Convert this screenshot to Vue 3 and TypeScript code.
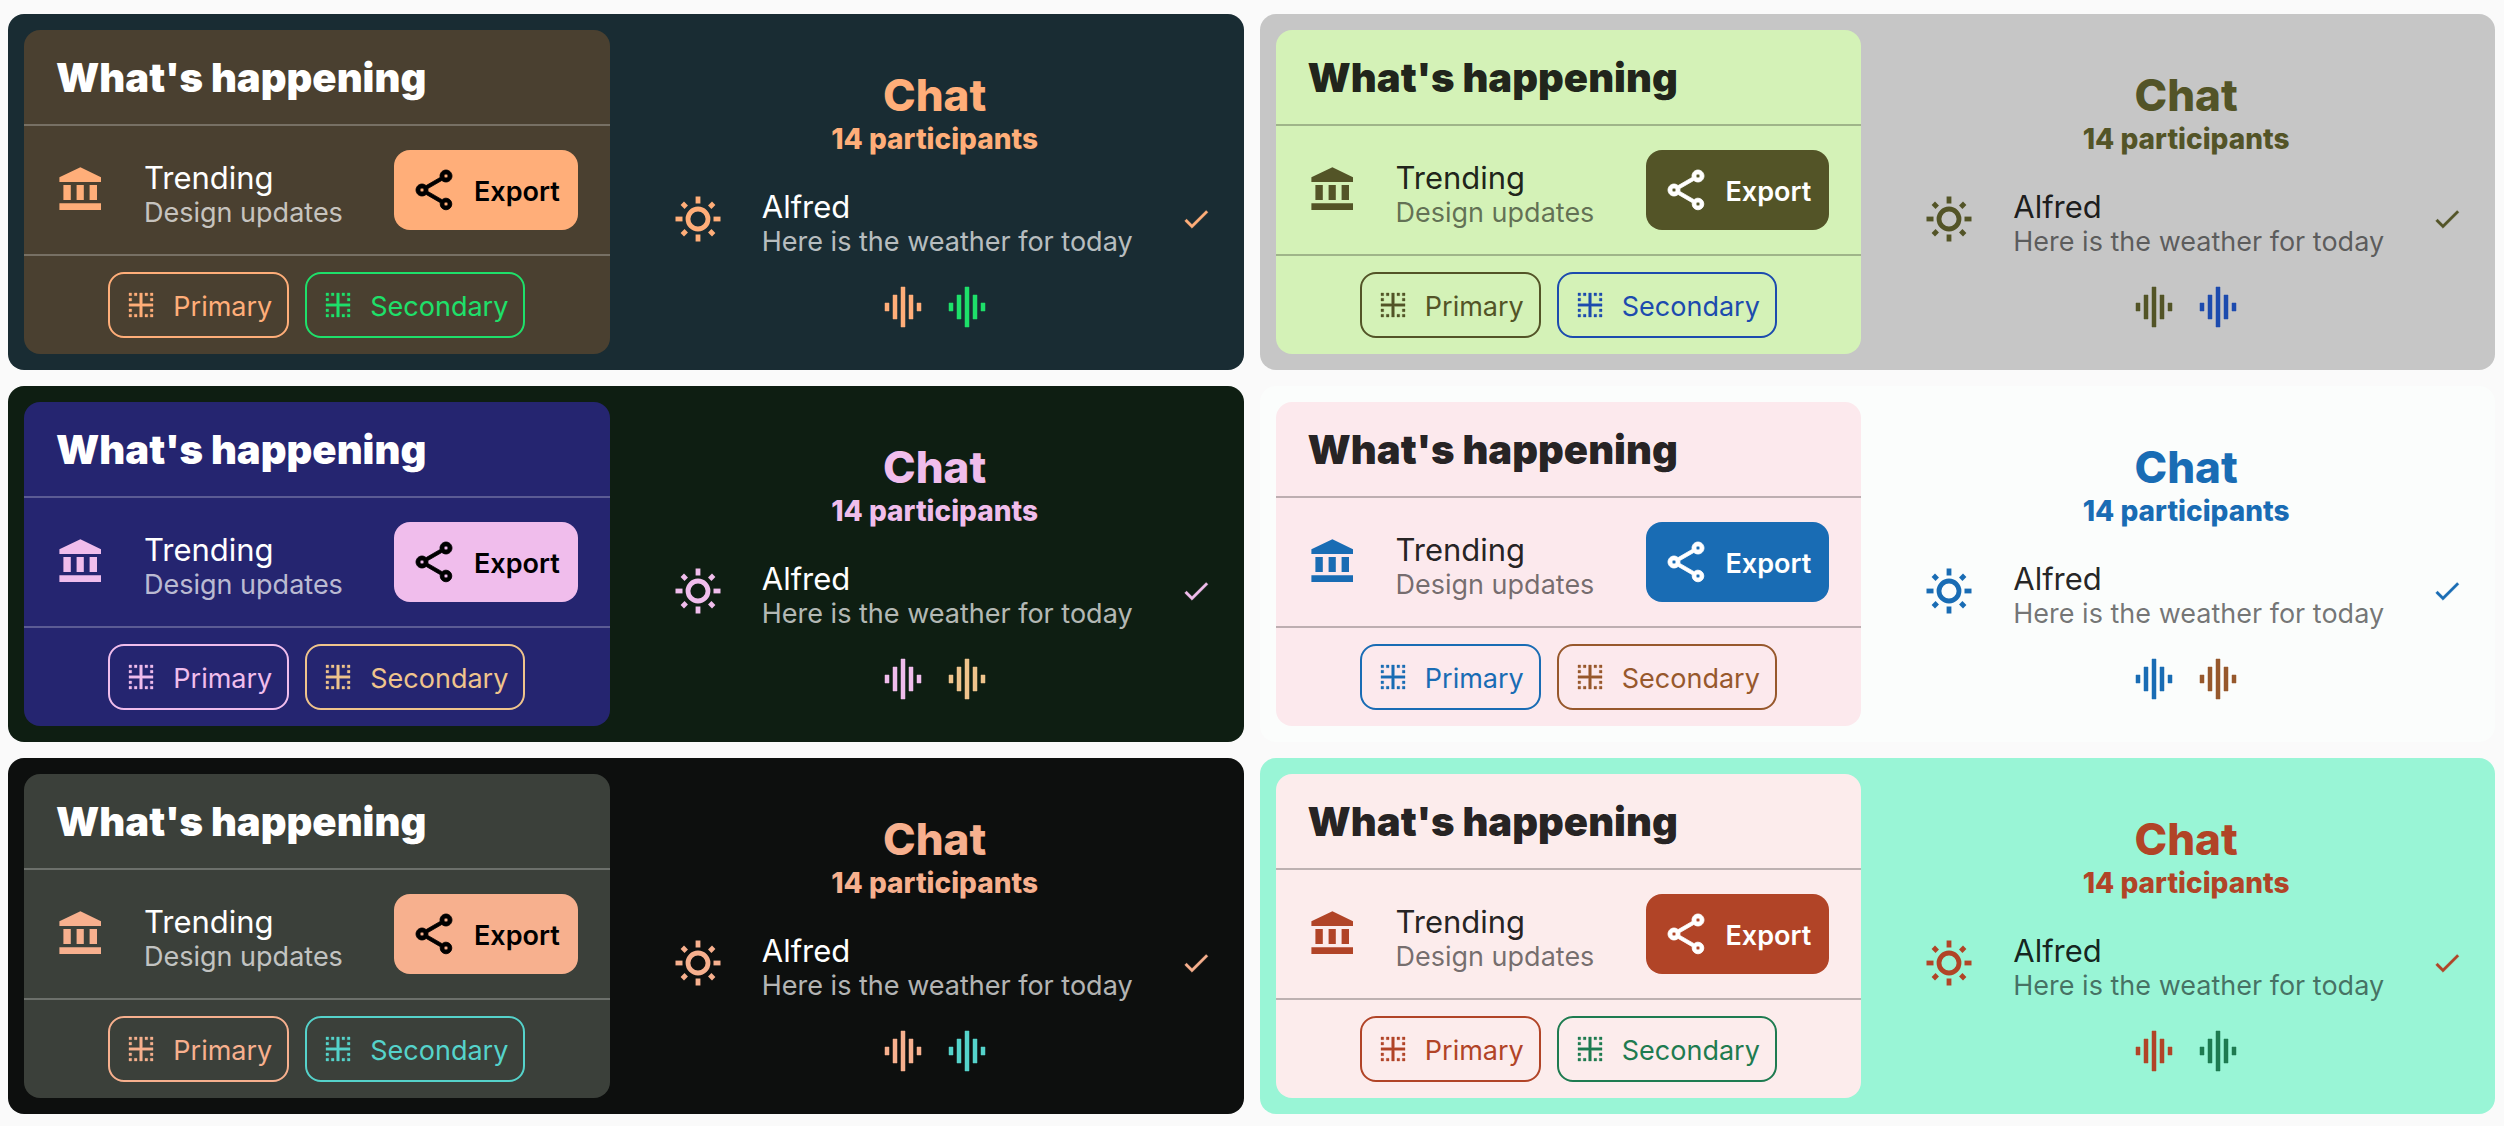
<script setup lang="ts">
interface Theme {
  id: string
  dark: boolean
  background: string
  surface: string
  primary: string
  secondary: string
}

const themes: Theme[] = [
  { id: 'dusk', dark: true, background: '#192c33', surface: '#4a4030', primary: '#ffae79', secondary: '#1ee06a' },
  { id: 'meadow', dark: false, background: '#c6c6c6', surface: '#d4f2b7', primary: '#535427', secondary: '#1c4bae' },
  { id: 'midnight', dark: true, background: '#0e1e12', surface: '#252570', primary: '#f0bdec', secondary: '#efc48c' },
  { id: 'blossom', dark: false, background: '#fbfdfc', surface: '#fce9ed', primary: '#196cb4', secondary: '#97582c' },
  { id: 'carbon', dark: true, background: '#0d0f0e', surface: '#3b403a', primary: '#f7b08e', secondary: '#55d3cb' },
  { id: 'mint', dark: false, background: '#99f5d6', surface: '#fcecec', primary: '#b14427', secondary: '#1e7b50' },
]

const icons = {
  bank: 'M12.2 .6L1.7 5.6V8H22.5V5.6ZM3.7 9.5V17H7.4V9.5ZM10.3 9.5V17H13.9V9.5ZM16.8 9.5V17H20.5V9.5ZM1.7 18.6V22H22.5V18.6Z',
  share:
    'M18 16.08C17.24 16.08 16.56 16.38 16.04 16.85L8.91 12.7C8.96 12.47 9 12.24 9 12S8.96 11.53 8.91 11.3L15.96 7.19C16.5 7.69 17.21 8 18 8C19.66 8 21 6.66 21 5S19.66 2 18 2S15 3.34 15 5C15 5.24 15.04 5.47 15.09 5.7L8.04 9.81C7.5 9.31 6.79 9 6 9C4.34 9 3 10.34 3 12S4.34 15 6 15C6.79 15 7.5 14.69 8.04 14.19L15.16 18.34C15.11 18.55 15.08 18.77 15.08 19C15.08 20.61 16.39 21.91 18 21.91S20.92 20.61 20.92 19C20.92 17.39 19.61 16.08 18 16.08M18 4C18.55 4 19 4.45 19 5S18.55 6 18 6S17 5.55 17 5S17.45 4 18 4M6 13C5.45 13 5 12.55 5 12S5.45 11 6 11S7 11.45 7 12S6.55 13 6 13M18 20C17.45 20 17 19.55 17 19S17.45 18 18 18S19 18.45 19 19S18.55 20 18 20Z',
  border:
    'M3 21h2v-2H3v2zm4 0h2v-2H7v2zM5 7H3v2h2V7zM3 17h2v-2H3v2zM9 3H7v2h2V3zM5 3H3v2h2V3zm12 0h-2v2h2V3zm2 6h2V7h-2v2zm0-6v2h2V3h-2zm-4 18h2v-2h-2v2zM13 3h-2v8H3v2h8v8h2v-8h8v-2h-8V3zm6 18h2v-2h-2v2zm0-4h2v-2h-2v2z',
  wave: 'M7 18h2V6H7v12zm4 4h2V2h-2v20zm-8-8h2v-4H3v4zm12 4h2V6h-2v12zm4-8v4h2v-4h-2z',
  check: 'M21 7L9 19L3.5 13.5L4.91 12.09L9 16.17L19.59 5.59L21 7Z',
}

const rays = [
  { angle: 0, top: 1.5, length: 7 },
  { angle: 45, top: 1.8, length: 5.6 },
  { angle: 90, top: 1.5, length: 7 },
  { angle: 135, top: 1.8, length: 5.6 },
  { angle: 180, top: 1.5, length: 7 },
  { angle: 225, top: 1.8, length: 5.6 },
  { angle: 270, top: 1.5, length: 7 },
  { angle: 315, top: 1.8, length: 5.6 },
]

function palette(theme: Theme): Record<string, string> {
  return {
    '--background': theme.background,
    '--surface': theme.surface,
    '--primary': theme.primary,
    '--secondary': theme.secondary,
  }
}
</script>

<template>
  <main class="themes">
    <section
      v-for="theme in themes"
      :key="theme.id"
      class="theme"
      :class="theme.dark ? 'dark' : 'light'"
      :style="palette(theme)"
    >
      <article class="panel">
        <h2 class="panel-title">What's happening</h2>
        <div class="item trending">
          <svg class="icon" viewBox="0 0 24 24" aria-hidden="true"><path :d="icons.bank" /></svg>
          <div class="item-text">
            <div class="item-title">Trending</div>
            <div class="item-subtitle">Design updates</div>
          </div>
          <button type="button" class="export">
            <svg class="icon heavy" viewBox="0 0 24 24" aria-hidden="true"><path :d="icons.share" /></svg>
            <span class="label">Export</span>
          </button>
        </div>
        <div class="chips">
          <button type="button" class="chip primary">
            <svg class="icon small medium" viewBox="0 0 24 24" aria-hidden="true"><path :d="icons.border" /></svg>
            <span class="label">Primary</span>
          </button>
          <button type="button" class="chip secondary">
            <svg class="icon small medium" viewBox="0 0 24 24" aria-hidden="true"><path :d="icons.border" /></svg>
            <span class="label">Secondary</span>
          </button>
        </div>
      </article>

      <article class="chat">
        <header class="chat-head">
          <h2 class="chat-title">Chat</h2>
          <p class="chat-count">14 participants</p>
        </header>
        <div class="item message">
          <svg class="icon" viewBox="0 0 48 48" aria-hidden="true">
            <circle cx="24" cy="24" r="10" fill="none" stroke="currentColor" stroke-width="4.8" />
            <rect
              v-for="ray in rays"
              :key="ray.angle"
              x="21.6"
              :y="ray.top"
              width="4.8"
              :height="ray.length"
              :transform="`rotate(${ray.angle} 24 24)`"
            />
          </svg>
          <div class="item-text">
            <div class="item-title">Alfred</div>
            <div class="item-subtitle">Here is the weather for today</div>
          </div>
          <svg class="icon small medium" viewBox="0 0 24 24" aria-hidden="true"><path :d="icons.check" /></svg>
        </div>
        <div class="waves">
          <svg class="icon medium primary" viewBox="0 0 24 24" aria-hidden="true"><path :d="icons.wave" /></svg>
          <svg class="icon medium secondary" viewBox="0 0 24 24" aria-hidden="true"><path :d="icons.wave" /></svg>
        </div>
      </article>
    </section>
  </main>
</template>

<style>
body {
  margin: 0;
  background: #fafafa;
}
</style>

<style scoped>
.themes {
  display: grid;
  grid-template-columns: 1fr 1fr;
  gap: 16px;
  padding: 14px 9px 12px 8px;
  font-family: Inter, Roboto, "Liberation Sans", sans-serif;
  font-size: 27px;
}

.theme {
  display: grid;
  grid-template-columns: 1fr 1fr;
  border-radius: 16px;
  background: var(--background);
}

.dark {
  --text: #ffffff;
  --muted: rgba(255, 255, 255, 0.7);
  --line: rgba(255, 255, 255, 0.25);
  --on-primary: #000000;
}

.light {
  --text: rgba(0, 0, 0, 0.87);
  --muted: rgba(0, 0, 0, 0.55);
  --line: rgba(0, 0, 0, 0.25);
  --on-primary: #ffffff;
}

.panel,
.chat {
  margin: 16px;
  border-radius: 16px;
  color: var(--text);
}

.panel {
  background: var(--surface);
}

.panel-title {
  margin: 0;
  padding: 24px 32px 22px;
  font-size: 40px;
  line-height: 48px;
  font-weight: 900;
}

.item {
  display: flex;
  align-items: center;
}

.item > .icon {
  color: var(--primary);
}

.trending {
  height: 128px;
  padding: 0 32px;
  border-top: 2px solid var(--line);
  border-bottom: 2px solid var(--line);
}

.message {
  height: 96px;
  padding: 0 16px 0 32px;
}

.item-text {
  flex: 1;
  margin-left: 40px;
  padding-top: 10px;
  white-space: nowrap;
}

.item-title {
  font-size: 31px;
  line-height: 36px;
}

.item-subtitle {
  line-height: 34px;
  color: var(--muted);
}

.icon {
  display: block;
  flex: none;
  width: 48px;
  height: 48px;
  fill: currentColor;
}

.icon.small {
  width: 32px;
  height: 32px;
}

.icon.medium {
  stroke: currentColor;
  stroke-width: 0.25;
}

.icon.heavy {
  stroke: currentColor;
  stroke-width: 0.4;
}

.export,
.chip {
  display: flex;
  align-items: center;
  gap: 16px;
  border-radius: 16px;
  font: inherit;
  cursor: pointer;
}

.label {
  padding-top: 2px;
}

.export {
  height: 80px;
  padding: 0 18px 0 16px;
  border: 0;
  background: var(--primary);
  color: var(--on-primary);
  font-weight: 600;
}

.chips {
  display: flex;
  align-items: center;
  justify-content: center;
  gap: 16px;
  height: 98px;
}

.chip {
  height: 66px;
  padding: 0 15px;
  border: 2px solid currentColor;
  background: transparent;
}

.primary {
  color: var(--primary);
}

.secondary {
  color: var(--secondary);
}

.chat {
  display: flex;
  flex-direction: column;
  gap: 14px;
  padding-top: 39px;
}

.chat-head {
  color: var(--primary);
  text-align: center;
}

.chat-title {
  margin: 0;
  font-size: 44px;
  line-height: 52px;
  font-weight: 800;
}

.chat-count {
  margin: 0;
  font-size: 28px;
  line-height: 36px;
  font-weight: 800;
}

.waves {
  display: flex;
  justify-content: center;
  gap: 16px;
  padding-top: 2px;
}
</style>
